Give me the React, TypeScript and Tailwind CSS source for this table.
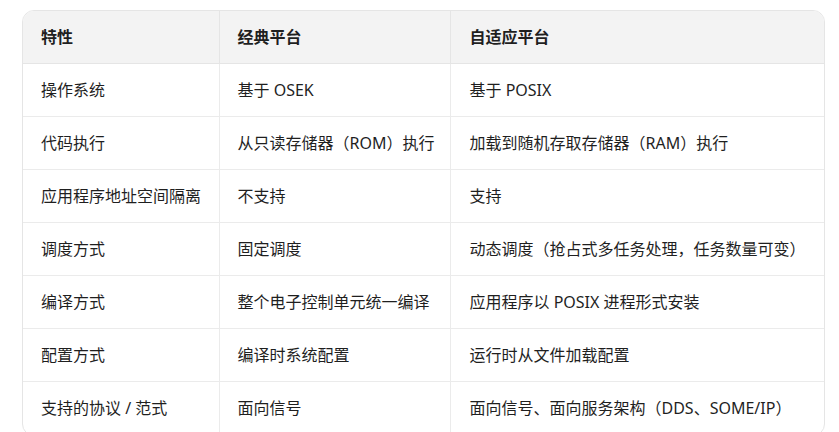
import React from "react";

const rows: [string, string, string][] = [
  ["操作系统", "基于 OSEK", "基于 POSIX"],
  ["代码执行", "从只读存储器（ROM）执行", "加载到随机存取存储器（RAM）执行"],
  ["应用程序地址空间隔离", "不支持", "支持"],
  ["调度方式", "固定调度", "动态调度（抢占式多任务处理，任务数量可变）"],
  ["编译方式", "整个电子控制单元统一编译", "应用程序以 POSIX 进程形式安装"],
  ["配置方式", "编译时系统配置", "运行时从文件加载配置"],
  ["支持的协议 / 范式", "面向信号", "面向信号、面向服务架构（DDS、SOME/IP）"],
];

export default function App() {
  return (
    <div
      className="bg-white pt-[10px] pl-[22px] h-[432px] overflow-hidden text-[16px] text-[#1f1f1f]"
      style={{ fontFamily: '"Noto Sans", "Noto Sans CJK SC", sans-serif' }}
    >
      {/* Comparison table */}
      <div className="w-[803px] rounded-xl border border-[#e5e5e5] overflow-hidden">
        <table className="w-full border-collapse table-fixed">
          <colgroup>
            <col className="w-[196px]" />
            <col className="w-[231px]" />
            <col />
          </colgroup>
          <thead>
            <tr className="bg-[#f3f3f3] h-[52px]">
              <th className="text-left font-bold pl-[18px] border-b border-[#e5e5e5]">特性</th>
              <th className="text-left font-bold pl-[18px] border-b border-l border-[#e5e5e5]">经典平台</th>
              <th className="text-left font-bold pl-[19px] border-b border-l border-[#e5e5e5]">自适应平台</th>
            </tr>
          </thead>
          <tbody>
            {rows.map((r, i) =>
              <tr key={i} className="h-[53px]">
                <td className="pl-[18px] border-b border-[#ebebeb] whitespace-nowrap">{r[0]}</td>
                <td className="pl-[18px] border-b border-l border-[#ebebeb] whitespace-nowrap">{r[1]}</td>
                <td className="pl-[19px] border-b border-l border-[#ebebeb] whitespace-nowrap">{r[2]}</td>
              </tr>
            )}
          </tbody>
        </table>
      </div>
    </div>
  );
}
